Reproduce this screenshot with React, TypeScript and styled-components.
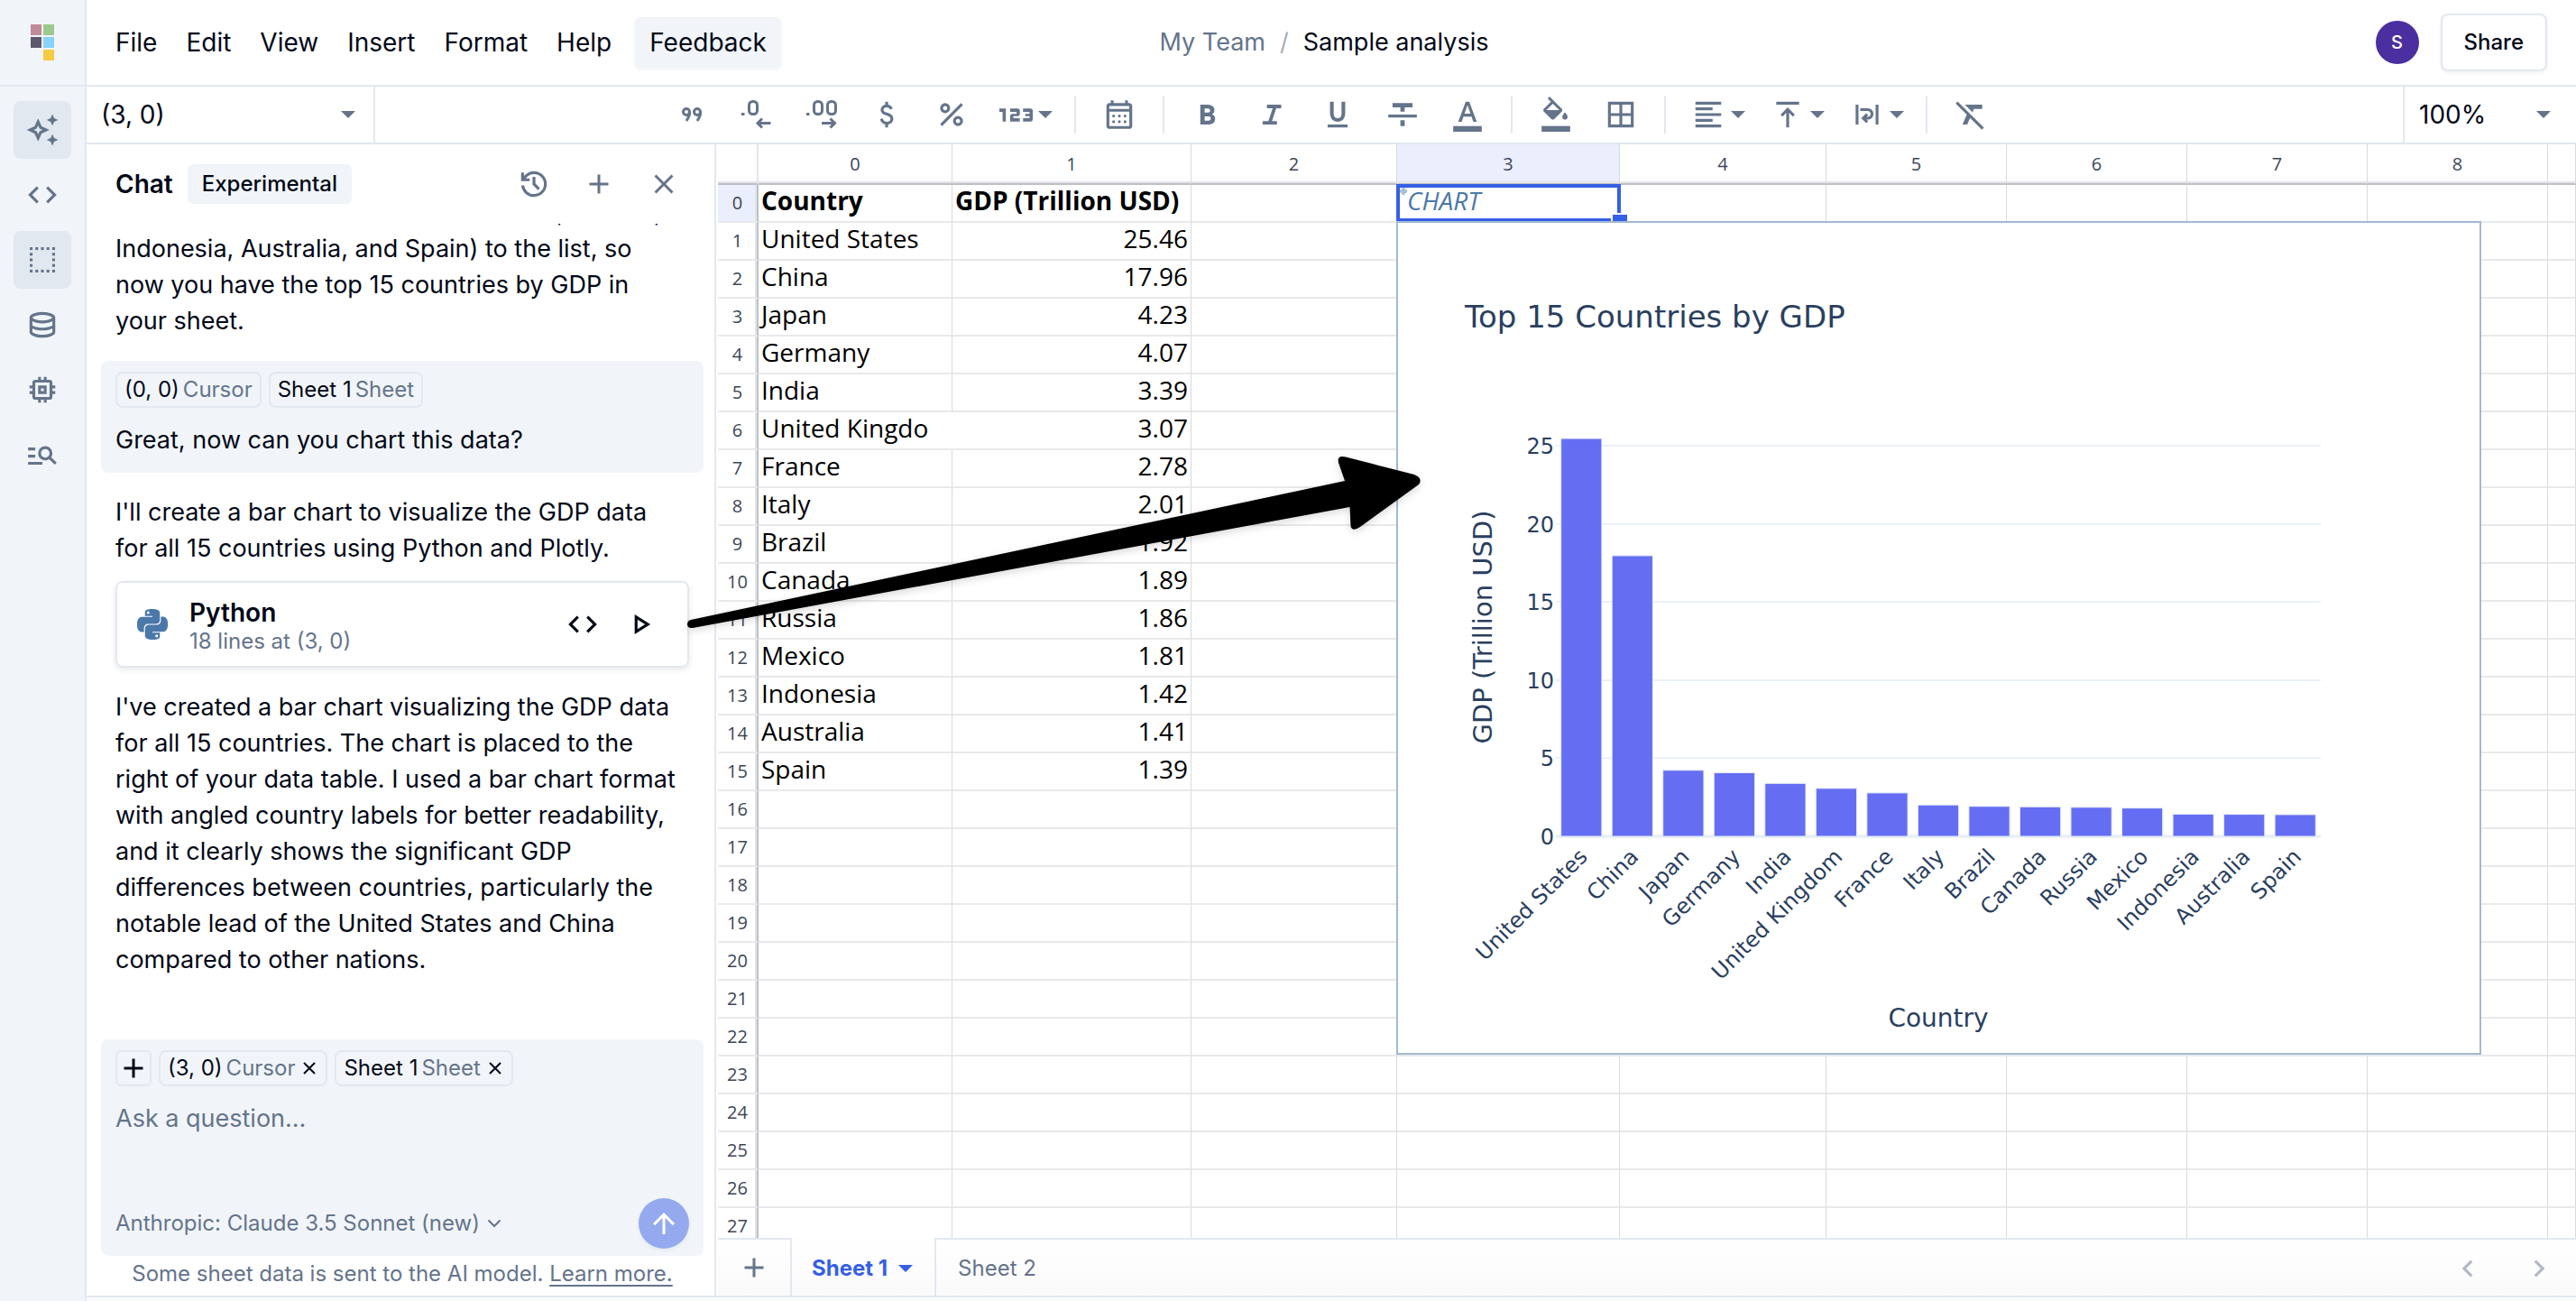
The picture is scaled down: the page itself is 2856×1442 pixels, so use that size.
import React from 'react';
import styled, { createGlobalStyle, css } from 'styled-components';
import { SiPython } from 'react-icons/si';

const c = {
  text: '#020817',
  muted: '#64748b',
  border: '#e2e8f0',
  soft: '#f1f5f9',
  primary: '#355fe5',
  selected: '#ebeefc',
  grid: '#e8e9eb',
  python: '#4b78aa',
  ink: '#2a3f5f',
  bar: '#656ef2',
};

const sans = `Inter, "Noto Sans", sans-serif`;
const cellFont = `"Open Sans", "Noto Sans", sans-serif`;
const chartFont = `Verdana, "DejaVu Sans", sans-serif`;

const Global = createGlobalStyle`
  *, *::before, *::after { box-sizing: border-box; }
  body { margin: 0; background: #fff; color: ${c.text}; font-family: ${sans}; font-size: 28px; line-height: 40px; }
  button, input, select, textarea { font: inherit; color: inherit; margin: 0; padding: 0; border: 0; background: none; outline: none; }
  button { cursor: pointer; }
  svg { display: block; flex: none; }
  p { margin: 0; }
`;

/* ---------- icons ---------- */

const paths = {
  sparkle:
    'm760-600-50-110-110-50 110-50 50-110 50 110 110 50-110 50-50 110Zm0 560-50-110-110-50 110-50 50-110 50 110 110 50-110 50-50 110ZM360-160 260-380 40-480l220-100 100-220 100 220 220 100-220 100-100 220Zm0-194 40-86 86-40-86-40-40-86-40 86-86 40 86 40 40 86Z',
  code: 'M320-240 80-480l240-240 57 57-184 184 183 183-56 56Zm320 0-57-57 184-184-183-183 56-56 240 240-240 240Z',
  database:
    'M480-120q-151 0-255.5-46.5T120-280v-400q0-66 105.5-113T480-840q149 0 254.5 47T840-680v400q0 67-104.5 113.5T480-120Zm0-479q89 0 179-25.5T760-679q-11-29-100.5-55T480-760q-91 0-178.5 25.5T200-679q14 30 101.5 55T480-599Zm0 199q42 0 81-4t74.5-11.5q35.5-7.5 67-18.5t57.5-25v-120q-26 14-57.5 25t-67 18.5Q600-528 561-524t-81 4q-42 0-82-4t-75.5-11.5Q287-543 256-554t-56-25v120q25 14 56 25t66.5 18.5Q358-408 398-404t82 4Zm0 200q46 0 93.5-7t87.5-18.5q40-11.5 67-26t32-29.5v-98q-26 14-57.5 25t-67 18.5Q600-328 561-324t-81 4q-42 0-82-4t-75.5-11.5Q287-343 256-354t-56-25v99q5 15 31.5 29t66.5 25.5q40 11.5 88 18.5t94 7Z',
  memory:
    'M360-360v-240h240v240H360Zm80-80h80v-80h-80v80Zm-80 320v-80h-80q-33 0-56.5-23.5T200-280v-80h-80v-80h80v-80h-80v-80h80v-80q0-33 23.5-56.5T280-760h80v-80h80v80h80v-80h80v80h80q33 0 56.5 23.5T760-680v80h80v80h-80v80h80v80h-80v80q0 33-23.5 56.5T680-200h-80v80h-80v-80h-80v80h-80Zm320-160v-400H280v400h400Z',
  search:
    'M80-200v-80h400v80H80Zm0-200v-80h200v80H80Zm0-200v-80h200v80H80Zm744 400L670-354q-24 17-52.5 25.5T560-320q-83 0-141.5-58.5T360-520q0-83 58.5-141.5T560-720q83 0 141.5 58.5T760-520q0 29-8.5 57.5T726-410l154 154-56 56ZM560-400q50 0 85-35t35-85q0-50-35-85t-85-35q-50 0-85 35t-35 85q0 50 35 85t85 35Z',
  history:
    'M480-120q-138 0-240.5-91.5T122-440h82q14 104 92.5 172T480-200q117 0 198.5-81.5T760-480q0-117-81.5-198.5T480-760q-69 0-129 32t-101 88h110v80H120v-240h80v94q51-64 124.5-99T480-840q75 0 140.5 28.5t114 77q48.5 48.5 77 114T840-480q0 75-28.5 140.5t-77 114q-48.5 48.5-114 77T480-120Zm112-192L440-464v-216h80v184l128 128-56 56Z',
  add: 'M440-440H200v-80h240v-240h80v240h240v80H520v240h-80v-240Z',
  close:
    'm256-200-56-56 224-224-224-224 56-56 224 224 224-224 56 56-224 224 224 224-56 56-224-224-224 224Z',
  play: 'M320-200v-560l440 280-440 280Zm80-146 210-134-210-134v268Z',
  up: 'M440-160v-487L216-423l-56-57 320-320 320 320-56 57-224-224v487h-80Z',
  left: 'M560-240 320-480l240-240 56 56-184 184 184 184-56 56Z',
  right: 'M504-480 320-664l56-56 240 240-240 240-56-56 184-184Z',
  dollar:
    'M441-120v-86q-53-12-91.5-46T293-348l74-30q15 48 44.5 73t77.5 25q41 0 69.5-18.5T587-356q0-35-22-55.5T463-458q-86-27-118-64.5T313-614q0-65 42-101t86-41v-84h80v84q50 8 82.5 36.5T651-650l-74 32q-12-32-34-48t-60-16q-44 0-67 19.5T393-614q0 33 30 52t104 40q69 20 104.5 63.5T667-358q0 71-42 108t-104 46v84h-80Z',
  percent:
    'M300-520q-58 0-99-41t-41-99q0-58 41-99t99-41q58 0 99 41t41 99q0 58-41 99t-99 41Zm0-80q25 0 42.5-17.5T360-660q0-25-17.5-42.5T300-720q-25 0-42.5 17.5T240-660q0 25 17.5 42.5T300-600Zm360 440q-58 0-99-41t-41-99q0-58 41-99t99-41q58 0 99 41t41 99q0 58-41 99t-99 41Zm0-80q25 0 42.5-17.5T720-300q0-25-17.5-42.5T660-360q-25 0-42.5 17.5T600-300q0 25 17.5 42.5T660-240Zm-444 80-56-56 584-584 56 56-584 584Z',
  bold: 'M272-200v-560h221q65 0 120 40t55 111q0 51-23 78.5T602-491q25 11 55.5 41t30.5 90q0 89-65 124.5T501-200H272Zm121-112h104q48 0 58.5-24.5T566-372q0-11-10.5-35.5T494-432H393v120Zm0-228h93q33 0 48-17t15-38q0-24-17-39t-44-15h-95v109Z',
  italic: 'M200-200v-100h160l120-360H320v-100h400v100H580L460-300h140v100H200Z',
  underline:
    'M200-120v-80h560v80H200Zm280-160q-101 0-157-63t-56-167v-330h103v336q0 56 28 91t82 35q54 0 82-35t28-91v-336h103v330q0 104-56 167t-157 63Z',
  strike: 'M80-400v-80h800v80H80Zm340-160v-120H200v-120h560v120H540v120H420Zm0 400v-160h120v160H420Z',
  color:
    'M80 0v-160h800V0H80Zm140-280 210-560h100l210 560h-96l-50-144H368l-52 144h-96Zm176-224h168l-82-232h-4l-82 232Z',
  swatch: 'M80 0v-160h800V0H80Z',
  borders:
    'M120-120v-720h720v720H120Zm640-80v-240H520v240h240Zm0-560H520v240h240v-240Zm-560 0v240h240v-240H200Zm0 560h240v-240H200v240Z',
  align:
    'M120-120v-80h720v80H120Zm0-160v-80h480v80H120Zm0-160v-80h720v80H120Zm0-160v-80h480v80H120Zm0-160v-80h720v80H120Z',
  valign: 'M160-760v-80h640v80H160Zm280 640v-408L336-424l-56-56 200-200 200 200-56 56-104-104v408h-80Z',
  wrap: 'M160-200v-560h80v560h-80Zm560 0v-560h80v560h-80ZM456-240 316-380l140-140 56 56-44 44h32q33 0 56.5-23.5T580-500q0-33-23.5-56.5T500-580H290v-80h210q66 0 113 47t47 113q0 66-47 113t-113 47h-32l44 44-56 56Z',
  clear: 'm528-546-93-93-121-121h486v120H568l-40 94ZM792-56 460-388l-80 188H249l119-280L56-792l56-56 736 736-56 56Z',
  calendar:
    'M200-80q-33 0-56.5-23.5T120-160v-560q0-33 23.5-56.5T200-800h40v-80h80v80h320v-80h80v80h40q33 0 56.5 23.5T840-720v560q0 33-23.5 56.5T760-80H200Zm0-80h560v-400H200v400Zm0-480h560v-80H200v80Z',
};

type IconName = keyof typeof paths;

const Icon = ({ name, size = 38, children }: { name: IconName; size?: number; children?: React.ReactNode }) => (
  <svg width={size} height={size} viewBox="0 -960 960 960" fill="currentColor" overflow="visible" aria-hidden="true">
    <path d={paths[name]} />
    {children}
  </svg>
);

const Caret = () => (
  <svg width="16" height="8" viewBox="0 0 16 8" fill="currentColor" aria-hidden="true">
    <path d="M0 0h16L8 8z" />
  </svg>
);

const SelectionIcon = () => {
  const at = [0, 1, 2, 3, 4];
  return (
    <svg width="28" height="28" viewBox="0 0 18 18" fill="currentColor" aria-hidden="true">
      {at.flatMap((i) =>
        at
          .filter((j) => i === 0 || i === 4 || j === 0 || j === 4)
          .map((j) => <rect key={`${i}${j}`} x={i * 4} y={j * 4} width="2" height="2" />)
      )}
    </svg>
  );
};

const ThousandsIcon = () => (
  <svg width="22" height="16" viewBox="0 0 22 16" fill="none" stroke="currentColor" strokeWidth="3" aria-hidden="true">
    <circle cx="5" cy="5" r="3.5" />
    <path d="M8.5 5v2q0 2.500-3.500 8" />
    <circle cx="17" cy="5" r="3.5" />
    <path d="M20.500 5v2q0 2.500-3.500 8" />
  </svg>
);

const DecimalIcon = ({ more }: { more?: boolean }) => (
  <svg width="34" height="32" viewBox="0 0 34 32" fill="none" stroke="currentColor" strokeWidth="3" aria-hidden="true">
    <path d="M0 15.500h3.500" />
    <rect x="8.500" y="1.500" width="9" height="14" rx="4" />
    {more && <rect x="23.500" y="1.500" width="9" height="14" rx="4" />}
    <path d={more ? 'M17 25.500h14M26.500 20.500l5 5-5 5' : 'M32.500 25.500h-14M23 20.500l-5 5 5 5'} />
  </svg>
);

const NumbersIcon = () => (
  <svg width="37" height="15" viewBox="160 -600 620 240" fill="currentColor" aria-hidden="true">
    <path d="M220-360v-180h-60v-60h120v240h-60Zm140 0v-100q0-17 11.500-28.500T400-500h80v-40H360v-60h140q17 0 28.500 11.500T540-560v60q0 17-11.500 28.500T500-460h-80v40h120v60H360Zm240 0v-60h120v-40h-80v-40h80v-40H600v-60h140q17 0 28.500 11.500T780-560v160q0 17-11.500 28.500T740-360H600Z" />
  </svg>
);

const FillIcon = () => (
  <Icon name="swatch">
    <path
      transform="translate(60 -236) scale(0.85)"
      d="M346-140 100-386q-10-10-15-22t-5-25q0-13 5-25t15-22l230-229-106-106 62-65 400 400q10 10 14.500 22t4.500 25q0 13-4.500 25T686-386L440-140q-10 10-22 15t-25 5q-13 0-25-5t-22-15Zm47-506L179-432h428L393-646Zm399 526q-36 0-61-25.500T706-208q0-27 13.500-51t30.500-47l42-54 44 54q16 23 30 47t14 51q0 37-26 62.500T792-120Z"
    />
  </Icon>
);

const CalendarIcon = () => (
  <Icon name="calendar">
    {[320, 480, 640].map((x) => (
      <React.Fragment key={x}>
        <circle cx={x} cy={-440} r={40} />
        <circle cx={x} cy={-280} r={40} />
      </React.Fragment>
    ))}
  </Icon>
);

const LogoGrid = styled.div`
  display: grid;
  grid-template-columns: 12px 12px;
  grid-auto-rows: 12px;
  gap: 2px;
`;
const LogoTile = styled.span<{ $color: string }>`
  background: ${(p) => p.$color};
`;

/* ---------- shell ---------- */

const Shell = styled.div`
  position: relative;
  display: flex;
  height: 100vh;
  overflow: hidden;
`;
const Rail = styled.nav`
  flex: none;
  width: 96px;
  border-right: 2px solid ${c.border};
  background: ${c.soft};
  display: flex;
  flex-direction: column;
  align-items: center;
  gap: 8px;
  color: ${c.muted};
`;
const LogoLink = styled.a`
  align-self: stretch;
  height: 96px;
  margin-bottom: 8px;
  border-bottom: 2px solid ${c.border};
  display: flex;
  align-items: center;
  justify-content: center;
`;
const RailButton = styled.button<{ $active?: boolean }>`
  width: 64px;
  height: 64px;
  border-radius: 8px;
  display: flex;
  align-items: center;
  justify-content: center;
  background: ${(p) => (p.$active ? c.border : 'transparent')};
`;
const Main = styled.div`
  flex: 1;
  min-width: 0;
  display: flex;
  flex-direction: column;
`;
const TopBar = styled.header`
  flex: none;
  height: 96px;
  border-bottom: 2px solid ${c.border};
  padding: 0 32px 0 16px;
  display: grid;
  grid-template-columns: 1fr auto 1fr;
  align-items: center;
`;
const Menu = styled.div`
  display: flex;
  align-items: center;
`;
const MenuItem = styled.button<{ $filled?: boolean }>`
  height: 56px;
  padding: 0 16px;
  border-radius: 6px;
  white-space: nowrap;
  ${(p) =>
    p.$filled &&
    css`
      margin-left: 10px;
      background: ${c.soft};
      box-shadow: 0 2px 4px rgba(0, 0, 0, 0.06);
    `}
`;
const Crumbs = styled.div`
  display: flex;
  gap: 16px;
  font-size: 27px;
  white-space: nowrap;
`;
const CrumbLink = styled.a`
  color: ${c.muted};
  text-decoration: none;
`;
const CrumbSlash = styled.span`
  color: #a3adba;
`;
const Account = styled.div`
  display: flex;
  align-items: center;
  justify-content: flex-end;
  gap: 24px;
`;
const Avatar = styled.span`
  width: 48px;
  height: 48px;
  border-radius: 50%;
  background: #4b2e9f;
  color: #fff;
  font-size: 20px;
  font-weight: 500;
  display: flex;
  align-items: center;
  justify-content: center;
`;
const ShareButton = styled.button`
  height: 64px;
  padding: 0 24px;
  border: 2px solid ${c.border};
  border-radius: 8px;
  font-size: 24px;
  font-weight: 500;
  box-shadow: 0 2px 4px rgba(0, 0, 0, 0.05);
`;

/* ---------- toolbar ---------- */

const Toolbar = styled.div`
  flex: none;
  height: 64px;
  border-bottom: 2px solid ${c.border};
  display: flex;
  color: ${c.muted};
`;
const PositionBox = styled.div`
  width: 320px;
  flex: none;
  border-right: 2px solid ${c.border};
  padding: 0 20px 0 16px;
  display: flex;
  align-items: center;
`;
const PositionInput = styled.input`
  flex: 1;
  min-width: 0;
  color: ${c.text};
`;
const ZoomBox = styled.div`
  width: 192px;
  flex: none;
  border-left: 2px solid ${c.border};
  padding: 0 28px 0 16px;
  display: flex;
  align-items: center;
  justify-content: space-between;
`;
const BareSelect = styled.select<{ $small?: boolean }>`
  appearance: none;
  cursor: pointer;
  ${(p) => (p.$small ? 'font-size: 24px; color: ' + c.muted : 'color: ' + c.text)};
`;
const Tools = styled.div`
  flex: 1;
  display: flex;
  align-items: center;
  justify-content: center;
  padding-right: 128px;
`;
const Tool = styled.button<{ $menu?: boolean }>`
  width: ${(p) => (p.$menu ? 88 : 72)}px;
  height: 62px;
  padding-left: ${(p) => (p.$menu ? 4 : 0)}px;
  display: flex;
  align-items: center;
  justify-content: center;
  gap: 6px;
`;
const Divider = styled.span`
  width: 2px;
  height: 42px;
  margin: 0 12px;
  background: ${c.border};
`;

/* ---------- chat ---------- */

const Body = styled.div`
  flex: 1;
  min-height: 0;
  display: flex;
`;
const Chat = styled.aside`
  flex: none;
  width: 698px;
  border-right: 2px solid ${c.border};
  display: flex;
  flex-direction: column;
`;
const ChatHeader = styled.div`
  flex: none;
  height: 88px;
  padding: 0 20px 0 32px;
  display: flex;
  align-items: center;
`;
const ChatTitle = styled.h2`
  margin: 0 16px 0 0;
  font-size: 28px;
  font-weight: 600;
`;
const Badge = styled.span`
  padding: 0 16px;
  border-radius: 6px;
  background: ${c.soft};
  font-size: 24px;
  line-height: 44px;
  font-weight: 500;
  margin-right: auto;
`;
const HeaderButton = styled.button`
  width: 72px;
  height: 64px;
  color: ${c.muted};
  display: flex;
  align-items: center;
  justify-content: center;
`;
const Messages = styled.div`
  flex: 1;
  min-height: 0;
  overflow: hidden;
  display: flex;
  flex-direction: column;
  justify-content: flex-end;
  gap: 24px;
  padding: 0 12px 68px 16px;
`;
const Reply = styled.div`
  padding: 0 16px;
`;
const MessageText = styled.p`
  padding-right: 8px;
  font-size: 27px;
`;
const Prompt = styled.div`
  padding: 12px 16px 16px;
  border-radius: 8px;
  background: ${c.soft};
  display: flex;
  flex-direction: column;
  gap: 16px;
`;
const Chips = styled.div`
  display: flex;
  gap: 8px;
`;
const Chip = styled.span`
  height: 40px;
  padding: 0 8px;
  border: 2px solid ${c.border};
  border-radius: 8px;
  display: flex;
  align-items: center;
  gap: 4px;
  font-size: 24px;
  line-height: 32px;
`;
const ChipKind = styled.span`
  color: ${c.muted};
`;
const ChipClose = styled.button`
  display: flex;
  margin: 0 2px 0 4px;
`;
const AddContext = styled.button`
  width: 40px;
  height: 40px;
  border: 2px solid ${c.border};
  border-radius: 6px;
  display: flex;
  align-items: center;
  justify-content: center;
`;
const CodeCard = styled.div`
  height: 96px;
  margin-top: 16px;
  padding: 0 32px 0 22px;
  border: 2px solid ${c.border};
  border-radius: 8px;
  box-shadow: 0 2px 6px rgba(0, 0, 0, 0.1);
  display: flex;
  align-items: center;
  gap: 24px;
`;
const CodeLabel = styled.div`
  flex: 1;
  padding-top: 6px;
`;
const CodeName = styled.div`
  font-weight: 600;
  line-height: 32px;
`;
const CodeMeta = styled.div`
  font-size: 24px;
  line-height: 32px;
  color: ${c.muted};
`;
const PythonMark = styled(SiPython)`
  color: ${c.python};
`;
const IconButton = styled.button`
  width: 40px;
  height: 64px;
  display: flex;
  align-items: center;
  justify-content: center;
`;
const Composer = styled.form`
  flex: none;
  margin: 0 12px 0 16px;
  padding: 12px 16px 8px;
  border-radius: 8px;
  background: ${c.soft};
`;
const Question = styled.textarea`
  display: block;
  width: 100%;
  height: 92px;
  margin: 16px 0;
  font-size: 27px;
  resize: none;
  &::placeholder {
    color: ${c.muted};
    opacity: 1;
  }
`;
const ComposerFoot = styled.div`
  display: flex;
  align-items: center;
  justify-content: space-between;
  color: ${c.muted};
`;
const ModelPicker = styled.label`
  display: flex;
  align-items: center;
  gap: 8px;
`;
const SendButton = styled.button`
  width: 56px;
  height: 56px;
  border-radius: 50%;
  background: #95aaee;
  color: #fff;
  display: flex;
  align-items: center;
  justify-content: center;
  box-shadow: 0 2px 4px rgba(0, 0, 0, 0.06);
`;
const Notice = styled.p`
  flex: none;
  padding: 0 12px 4px 16px;
  font-size: 24px;
  text-align: center;
  color: ${c.muted};
`;
const NoticeLink = styled.a`
  color: inherit;
  text-underline-offset: 4px;
`;

/* ---------- sheet ---------- */

const Workspace = styled.section`
  flex: 1;
  min-width: 0;
  padding-left: 2px;
  display: flex;
  flex-direction: column;
`;
const GridFrame = styled.div`
  position: relative;
  flex: 1;
  min-height: 0;
  overflow: hidden;
`;
const Sheet = styled.table`
  width: 100%;
  table-layout: fixed;
  border-spacing: 0;
  font-family: ${cellFont};
`;
const Column = styled.col<{ $width?: number }>`
  ${(p) => p.$width && `width: ${p.$width}px`};
`;
const headText = css`
  padding: 0;
  font-size: 20px;
  line-height: 28px;
  font-weight: 400;
  color: #3b4656;
  text-align: center;
`;
const ColHead = styled.th<{ $on?: boolean }>`
  ${headText};
  height: 45px;
  border-right: 1px solid #d8dade;
  border-bottom: 2px solid #bcc1c6;
  box-shadow: inset 0 -2px #e3e5e7;
  background: ${(p) => (p.$on ? c.selected : '#fff')};
`;
const Corner = styled.td`
  padding: 0;
  border-right: 2px solid #e3e5e7;
  border-bottom: 2px solid #bcc1c6;
  box-shadow: inset 0 -2px #e3e5e7;
`;
const RowHead = styled.th<{ $on?: boolean }>`
  ${headText};
  border-right: 2px solid #bcc1c6;
  border-bottom: 2px solid ${c.grid};
  box-shadow: inset -2px 0 #e3e5e7;
  background: ${(p) => (p.$on ? c.selected : '#fff')};
`;
const Cell = styled.td<{ $bold?: boolean; $number?: boolean; $open?: boolean }>`
  height: 42px;
  padding: 0 3px;
  border-right: 1px solid ${(p) => (p.$open ? 'transparent' : '#d8dade')};
  border-bottom: 2px solid ${c.grid};
  vertical-align: top;
  white-space: nowrap;
  line-height: 34px;
  color: #000;
  text-align: ${(p) => (p.$number ? 'right' : 'left')};
  font-weight: ${(p) => (p.$bold ? 700 : 400)};
`;
const ChartCell = styled(Cell)`
  position: relative;
  padding-left: 11px;
  font-style: italic;
  color: ${c.python};
`;
const Cursor = styled.span`
  position: absolute;
  inset: -1px -2px -1px -1px;
  border: 4px solid ${c.primary};
`;
const CursorHandle = styled.span`
  position: absolute;
  right: -11px;
  bottom: -11px;
  width: 20px;
  height: 20px;
  border: 2px solid #fff;
  background: ${c.primary};
`;
const CellMark = styled(SiPython)`
  position: absolute;
  left: 3px;
  top: 3px;
  opacity: 0.5;
`;
const ChartPane = styled.figure`
  position: absolute;
  left: 752px;
  top: 85px;
  margin: 0;
  border: 2px solid #a2b9d1;
  background: #fff;
`;
const SheetBar = styled.div`
  flex: none;
  height: 64px;
  display: flex;
  background: linear-gradient(#fff, #fafafb);
  font-size: 24px;
  color: ${c.muted};
`;
const AddSheet = styled.button`
  width: 80px;
  border-top: 2px solid ${c.border};
  display: flex;
  align-items: center;
  justify-content: center;
`;
const Tab = styled.button<{ $active?: boolean }>`
  padding: 4px 24px 0;
  display: flex;
  align-items: center;
  gap: 12px;
  ${(p) =>
    p.$active
      ? css`
          padding-left: 22px;
          border: solid ${c.border};
          border-width: 0 2px;
          color: ${c.primary};
          font-weight: 700;
        `
      : css`
          border-top: 2px solid ${c.border};
          padding-top: 2px;
        `}
`;
const TabScroll = styled.div`
  flex: 1;
  border-top: 2px solid ${c.border};
  display: flex;
  justify-content: flex-end;
  padding-right: 20px;
  gap: 40px;
  color: #b1b9c5;
`;
const StatusBar = styled.footer`
  flex: none;
  height: 6px;
  border-top: 2px solid ${c.border};
  background: #fbfbfc;
`;
const ArrowOverlay = styled.svg`
  position: absolute;
  left: 756px;
  top: 496px;
  pointer-events: none;
  filter: drop-shadow(0 3px 4px rgba(0, 0, 0, 0.15));
`;

/* ---------- data ---------- */

const data: [string, number][] = [
  ['United States', 25.46],
  ['China', 17.96],
  ['Japan', 4.23],
  ['Germany', 4.07],
  ['India', 3.39],
  ['United Kingdom', 3.07],
  ['France', 2.78],
  ['Italy', 2.01],
  ['Brazil', 1.92],
  ['Canada', 1.89],
  ['Russia', 1.86],
  ['Mexico', 1.81],
  ['Indonesia', 1.42],
  ['Australia', 1.41],
  ['Spain', 1.39],
];

const columnWidths = [215, 265, 228, 247, 229, 200, 200, 200, 200];
const blank = (from: number) => Array.from({ length: 10 - from }, (_, i) => <Cell key={from + i} />);

const plot = { left: 175, right: 1023, base: 680, unit: 17.32 };
const step = (plot.right - plot.left) / data.length;

const Chart = () => (
  <svg width="1199" height="920" viewBox="0 0 1199 920" fontFamily={chartFont} fill={c.ink} role="img" aria-label="Top 15 Countries by GDP">
    <text x="74" y="116" fontSize="34">
      Top 15 Countries by GDP
    </text>
    {[5, 10, 15, 20, 25].map((v) => (
      <rect key={v} x={plot.left} y={Math.round(plot.base - v * plot.unit) - 1} width={plot.right - plot.left} height="2" fill="#ebf0f8" />
    ))}
    <rect x={plot.left} y={plot.base - 2} width={plot.right - plot.left} height="4" fill="#ebf0f8" />
    {[0, 5, 10, 15, 20, 25].map((v) => (
      <text key={v} x="173" y={Math.round(plot.base - v * plot.unit) + 9} fontSize="24" textAnchor="end">
        {v}
      </text>
    ))}
    {data.map(([name, value], i) => {
      const x = plot.left + step * i;
      const tx = x + step / 2 + 8;
      return (
        <g key={name}>
          <rect x={x + step * 0.1} y={plot.base - value * plot.unit} width={step * 0.8} height={value * plot.unit} fill={c.bar} stroke="#e5ecf6" strokeWidth="1" />
          <text x={tx} y="704" fontSize="24" textAnchor="end" transform={`rotate(-45 ${tx} 704)`}>
            {name}
          </text>
        </g>
      );
    })}
    <text x="104" y="448" fontSize="29" textAnchor="middle" transform="rotate(-90 104 448)">
      GDP (Trillion USD)
    </text>
    <text x="599" y="891" fontSize="28" textAnchor="middle">
      Country
    </text>
  </svg>
);

const CloseMark = () => (
  <svg width="16" height="14" viewBox="0 0 16 14" fill="none" stroke="currentColor" strokeWidth="2" aria-hidden="true">
    <path d="M2 1l12 12M14 1L2 13" />
  </svg>
);

const ContextChip = ({ value, kind, removable }: { value: string; kind: string; removable?: boolean }) => (
  <Chip>
    {value}
    <ChipKind>{kind}</ChipKind>
    {removable && (
      <ChipClose type="button" aria-label={`Remove ${kind}`}>
        <CloseMark />
      </ChipClose>
    )}
  </Chip>
);

const ToolButton = ({ label, icon, menu, children }: { label: string; icon?: IconName; menu?: boolean; children?: React.ReactNode }) => (
  <Tool type="button" aria-label={label} $menu={menu}>
    {icon ? <Icon name={icon} /> : children}
    {menu && <Caret />}
  </Tool>
);

const ChatPanel = () => (
  <Chat>
    <ChatHeader>
      <ChatTitle>Chat</ChatTitle>
      <Badge>Experimental</Badge>
      <HeaderButton aria-label="History"><Icon name="history" /></HeaderButton>
      <HeaderButton aria-label="New chat"><Icon name="add" size={36} /></HeaderButton>
      <HeaderButton aria-label="Close"><Icon name="close" size={36} /></HeaderButton>
    </ChatHeader>
    <Messages>
      <Reply>
        <MessageText>
          I've added five more countries (Russia, Mexico, Indonesia, Australia, and Spain) to the list, so now you have
          the top 15 countries by GDP in your sheet.
        </MessageText>
      </Reply>
      <Prompt>
        <Chips>
          <ContextChip value="(0, 0)" kind="Cursor" />
          <ContextChip value="Sheet 1" kind="Sheet" />
        </Chips>
        <MessageText>Great, now can you chart this data?</MessageText>
      </Prompt>
      <Reply>
        <MessageText>
          I'll create a bar chart to visualize the GDP data for all 15 countries using Python and Plotly.
        </MessageText>
        <CodeCard>
          <PythonMark size={34} />
          <CodeLabel>
            <CodeName>Python</CodeName>
            <CodeMeta>18 lines at (3, 0)</CodeMeta>
          </CodeLabel>
          <IconButton aria-label="Show code"><Icon name="code" /></IconButton>
          <IconButton aria-label="Run"><Icon name="play" /></IconButton>
        </CodeCard>
      </Reply>
      <Reply>
        <MessageText>
          I've created a bar chart visualizing the GDP data for all 15 countries. The chart is placed to the right of
          your data table. I used a bar chart format with angled country labels for better readability, and it clearly
          shows the significant GDP differences between countries, particularly the notable lead of the United States
          and China compared to other nations.
        </MessageText>
      </Reply>
    </Messages>
    <Composer>
      <Chips>
        <AddContext type="button" aria-label="Add context"><Icon name="add" size={36} /></AddContext>
        <ContextChip value="(3, 0)" kind="Cursor" removable />
        <ContextChip value="Sheet 1" kind="Sheet" removable />
      </Chips>
      <Question aria-label="Ask a question" placeholder="Ask a question..." />
      <ComposerFoot>
        <ModelPicker>
          <BareSelect $small aria-label="Model">
            <option>Anthropic: Claude 3.5 Sonnet (new)</option>
          </BareSelect>
          <svg width="16" height="10" viewBox="0 0 16 10" fill="none" stroke="currentColor" strokeWidth="2" aria-hidden="true">
            <path d="M1.500 1.500L8 8l6.500-6.500" />
          </svg>
        </ModelPicker>
        <SendButton type="button" aria-label="Send"><Icon name="up" size={36} /></SendButton>
      </ComposerFoot>
    </Composer>
    <Notice>
      Some sheet data is sent to the AI model. <NoticeLink href="#learn">Learn more.</NoticeLink>
    </Notice>
  </Chat>
);

const SheetGrid = () => (
  <GridFrame>
    <Sheet>
      <colgroup>
        <Column $width={45} />
        {columnWidths.map((w, i) => <Column key={i} $width={w} />)}
        <Column />
      </colgroup>
      <thead>
        <tr>
          <Corner />
          {columnWidths.map((_, i) => <ColHead key={i} scope="col" $on={i === 3}>{i}</ColHead>)}
          <ColHead />
        </tr>
      </thead>
      <tbody>
        <tr>
          <RowHead scope="row" $on>0</RowHead>
          <Cell $bold>Country</Cell>
          <Cell $bold>GDP (Trillion USD)</Cell>
          <Cell />
          <ChartCell>
            CHART
            <CellMark size={8} />
            <Cursor />
            <CursorHandle />
          </ChartCell>
          {blank(4)}
        </tr>
        {data.map(([name, value], i) => {
          const long = name.length > 13;
          return (
            <tr key={name}>
              <RowHead scope="row">{i + 1}</RowHead>
              <Cell $open={long}>{long ? name.slice(0, 13) : name}</Cell>
              <Cell $number>{value.toFixed(2)}</Cell>
              {blank(2)}
            </tr>
          );
        })}
        {Array.from({ length: 12 }, (_, i) => (
          <tr key={i}>
            <RowHead scope="row">{i + 16}</RowHead>
            {blank(0)}
          </tr>
        ))}
      </tbody>
    </Sheet>
    <ChartPane><Chart /></ChartPane>
  </GridFrame>
);

export default function App() {
  return (
    <Shell>
      <Global />
      <Rail>
        <LogoLink href="#home" aria-label="Home">
          <LogoGrid>
            <LogoTile $color="#c18a98" />
            <LogoTile $color="#9dc98f" />
            <LogoTile $color="#5e586b" />
            <LogoTile $color="#88d2fd" />
            <LogoTile $color="transparent" />
            <LogoTile $color="#f6ca43" />
          </LogoGrid>
        </LogoLink>
        <RailButton $active aria-label="AI chat"><Icon name="sparkle" /></RailButton>
        <RailButton aria-label="Code"><Icon name="code" /></RailButton>
        <RailButton $active aria-label="Cell outlines"><SelectionIcon /></RailButton>
        <RailButton aria-label="Connections"><Icon name="database" /></RailButton>
        <RailButton aria-label="Kernel"><Icon name="memory" /></RailButton>
        <RailButton aria-label="Search"><Icon name="search" /></RailButton>
      </Rail>
      <Main>
        <TopBar>
          <Menu>
            {['File', 'Edit', 'View', 'Insert', 'Format', 'Help'].map((m) => <MenuItem key={m}>{m}</MenuItem>)}
            <MenuItem $filled>Feedback</MenuItem>
          </Menu>
          <Crumbs>
            <CrumbLink href="#team">My Team</CrumbLink>
            <CrumbSlash>/</CrumbSlash>
            <span>Sample analysis</span>
          </Crumbs>
          <Account>
            <Avatar>S</Avatar>
            <ShareButton>Share</ShareButton>
          </Account>
        </TopBar>
        <Toolbar>
          <PositionBox>
            <PositionInput aria-label="Cell position" defaultValue="(3, 0)" />
            <Caret />
          </PositionBox>
          <Tools>
            <ToolButton label="Thousands separator"><ThousandsIcon /></ToolButton>
            <ToolButton label="Decrease decimals"><DecimalIcon /></ToolButton>
            <ToolButton label="Increase decimals"><DecimalIcon more /></ToolButton>
            <ToolButton label="Currency" icon="dollar" />
            <ToolButton label="Percent" icon="percent" />
            <ToolButton label="Number format" menu><NumbersIcon /></ToolButton>
            <Divider />
            <ToolButton label="Date"><CalendarIcon /></ToolButton>
            <Divider />
            <ToolButton label="Bold" icon="bold" />
            <ToolButton label="Italic" icon="italic" />
            <ToolButton label="Underline" icon="underline" />
            <ToolButton label="Strikethrough" icon="strike" />
            <ToolButton label="Text color" icon="color" />
            <Divider />
            <ToolButton label="Fill color"><FillIcon /></ToolButton>
            <ToolButton label="Borders" icon="borders" />
            <Divider />
            <ToolButton label="Align" icon="align" menu />
            <ToolButton label="Vertical align" icon="valign" menu />
            <ToolButton label="Wrap" icon="wrap" menu />
            <Divider />
            <ToolButton label="Clear formatting" icon="clear" />
          </Tools>
          <ZoomBox>
            <BareSelect aria-label="Zoom">
              <option>100%</option>
            </BareSelect>
            <Caret />
          </ZoomBox>
        </Toolbar>
        <Body>
          <ChatPanel />
          <Workspace>
            <SheetGrid />
            <SheetBar>
              <AddSheet aria-label="Add sheet"><Icon name="add" size={36} /></AddSheet>
              <Tab $active>Sheet 1<Caret /></Tab>
              <Tab>Sheet 2</Tab>
              <TabScroll>
                <IconButton aria-label="Scroll left"><Icon name="left" /></IconButton>
                <IconButton aria-label="Scroll right"><Icon name="right" /></IconButton>
              </TabScroll>
            </SheetBar>
          </Workspace>
        </Body>
        <StatusBar />
      </Main>
      <ArrowOverlay width="830" height="210" viewBox="756 496 830 210">
        <path d="M766 687L1491 533L1484 513Q1482 504 1492 506.500L1568 526Q1578 530 1573 537L1508 584Q1499 590 1497.500 583L1496.500 562L768 696Q762 696.500 762 692Q762 688 766 687Z" />
      </ArrowOverlay>
    </Shell>
  );
}
